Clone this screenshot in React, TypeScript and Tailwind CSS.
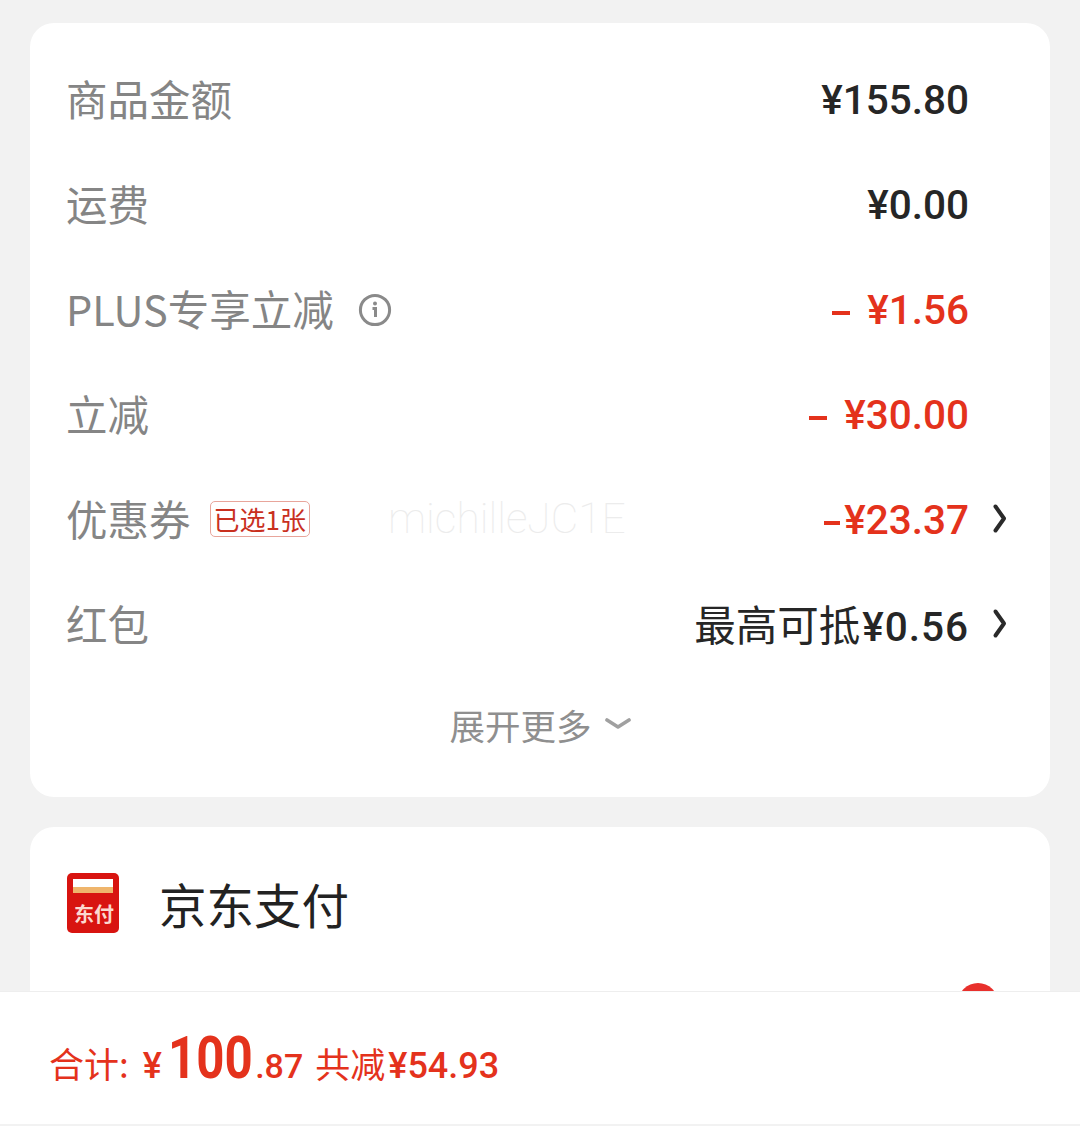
const CJK = "font-['Noto_Sans_CJK_SC','Noto_Sans',sans-serif]";
const NUM = "font-['Roboto','Noto_Sans_CJK_SC',sans-serif]";

function Chevron() {
  return (
    <svg width="16" height="32" viewBox="0 0 16 32" fill="none" className="ml-[23px] mt-[-3px] shrink-0">
      <path d="M3.5 3.5 L12 15.5 L3.5 27.5" stroke="#2a2a2a" strokeWidth="4" strokeLinecap="round" strokeLinejoin="round" />
    </svg>
  );
}

function InfoIcon() {
  return (
    <svg width="34" height="34" viewBox="0 0 34 34" fill="none" className="ml-[24px] mb-[2px] shrink-0">
      <circle cx="17" cy="17" r="14.6" stroke="#8a8a8a" strokeWidth="3" />
      <circle cx="17" cy="10.5" r="2" fill="#8a8a8a" />
      <path d="M14.5 15.5 H17.5 V24" stroke="#8a8a8a" strokeWidth="3" />
    </svg>
  );
}

function Minus({ wide }: { wide?: boolean }) {
  return <span className={`${wide ? "mr-[17px] w-[18px]" : "mr-[4px] w-[16px]"} mt-[-2px] inline-block h-[4px] bg-[#e4321c] align-middle`} />;
}

function Row({ label, value, red, extra, chevron }: { label: string; value: React.ReactNode; red?: boolean; extra?: React.ReactNode; chevron?: boolean }) {
  return (
    <div className="flex h-[105px] items-center pl-[36px] pr-[42px]">
      <span className={`${CJK} mb-[4px] text-[41.5px] font-normal leading-none text-[#858585]`}>{label}</span>
      {extra}
      <div className={`ml-auto flex items-center ${chevron ? "" : "mr-[39px]"}`}>
        <span className={`${NUM} text-[40.5px] font-medium leading-none ${red ? "text-[#e4321c]" : "text-[#262626]"}`}>{value}</span>
        {chevron && <Chevron />}
      </div>
    </div>
  );
}

export default function App() {
  return (
    <div className="flex h-[1135px] w-[1080px] flex-col overflow-hidden bg-[#f2f2f2]">
      <div className="flex h-[991px] flex-col gap-[30px] overflow-hidden px-[30px] pt-[23px]">
        <section className="relative shrink-0 h-[774px] rounded-[24px] bg-white pt-[25px]">
          <Row label="商品金额" value="¥155.80" />
          <Row label="运费" value="¥0.00" />
          <Row label="PLUS专享立减" value={<><Minus wide />¥1.56</>} red extra={<InfoIcon />} />
          <Row label="立减" value={<><Minus wide />¥30.00</>} red />
          <Row
            label="优惠券"
            value={<><Minus />¥23.37</>}
            red
            chevron
            extra={
              <span className={`${CJK} ml-[19px] mb-[4px] flex h-[36px] items-center rounded-[5px] border border-[#e8a59b] px-[3px] text-[26px] leading-none text-[#c9301f]`}>
                已选1张
              </span>
            }
          />
          <Row
            label="红包"
            value={<><span className={`${CJK} mr-[2px] text-[41.5px] font-normal`}>最高可抵</span><span className="tracking-[1px]">¥0.56</span></>}
            chevron
          />
          <div className="flex h-[98px] items-center justify-center">
            <span className={`${CJK} mb-[4px] text-[35.5px] font-normal leading-none text-[#8f8f8f]`}>展开更多</span>
            <svg width="26" height="14" viewBox="0 0 26 14" fill="none" className="ml-[13px] mt-[-6px]">
              <path d="M2 3 L13 10 L24 3" stroke="#a0a0a0" strokeWidth="3.6" strokeLinecap="round" strokeLinejoin="round" />
            </svg>
          </div>
          <span className="absolute left-[358px] top-[472px] font-['Roboto',sans-serif] text-[42.5px] font-thin leading-[48px] text-[#ececec]">michilleJC1E</span>
        </section>
        <section className="shrink-0 h-[300px] rounded-[24px] bg-white">
          <div className="flex h-[156px] items-start pl-[37px] pt-[46px]">
            <svg width="52" height="60" viewBox="0 0 52 60" className="shrink-0" aria-hidden="true">
              <rect width="52" height="60" rx="5" fill="#d81410" />
              <rect x="6" y="6" width="40" height="8" fill="#ffffff" />
              <rect x="6" y="14" width="40" height="6" fill="#efb56c" />
              <text x="27" y="49" textAnchor="middle" fontSize="20" fontWeight="700" fill="#fbd9cf" fontFamily="'Noto Sans CJK SC', sans-serif">东付</text>
            </svg>
            <span className={`${CJK} ml-[40px] mt-[1px] text-[47.5px] font-normal leading-[60px] text-[#222222]`}>京东支付</span>
          </div>
          <div className="relative h-[20px]">
            <span className="absolute left-[928px] top-0 block size-[40px] rounded-full bg-[#e8302c]" />
          </div>
        </section>
      </div>
      <footer className="h-[144px] shrink-0 border-t border-[#eeeeee] bg-white">
        <div className="flex h-[134px] items-center border-b-2 border-[#f2f2f2] pl-[49px]">
          <div className="flex items-baseline text-[#e4321c]">
            <span className={`${CJK} text-[35px] font-normal leading-none`}>合计:</span>
            <span className={`${NUM} ml-[14px] text-[36px] font-medium leading-none`}>¥</span>
            <span className={`${NUM} ml-[6px] mr-[-19px] inline-block origin-left scale-x-[0.82] text-[60px] font-bold leading-none`}>100</span>
            <span className={`${NUM} ml-[3px] text-[34px] font-medium leading-none`}>.87</span>
            <span className={`${CJK} ml-[12px] text-[35px] font-normal leading-none`}>共减</span>
            <span className={`${NUM} ml-[3px] text-[36px] font-medium leading-none`}>¥54.93</span>
          </div>
        </div>
      </footer>
    </div>
  );
}
